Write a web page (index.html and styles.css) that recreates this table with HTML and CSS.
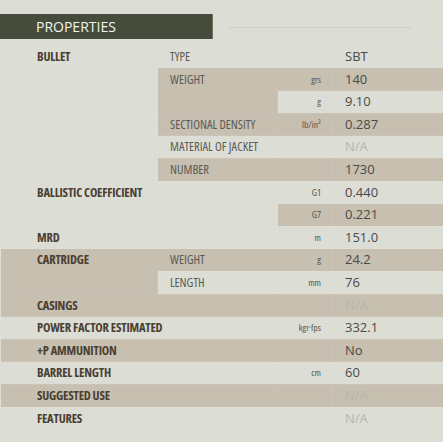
FILE: index.html
```html
<!DOCTYPE html>
<html>
<head>
<meta charset="utf-8">
<link rel="stylesheet" href="styles.css">
</head>
<body>
<div class="head">
  <div class="head-bar">PROPERTIES</div>
  <div class="head-line"></div>
</div>
<table class="props">
  <colgroup><col class="c1"><col class="c2"><col class="c3"><col class="c4"></colgroup>
  <tr><td class="lbl" rowspan="6">BULLET</td><td class="sub">TYPE</td><td class="unit"></td><td class="val">SBT</td></tr>
  <tr><td class="sub" rowspan="2">WEIGHT</td><td class="unit">grs</td><td class="val">140</td></tr>
  <tr><td class="unit">g</td><td class="val">9.10</td></tr>
  <tr><td class="sub">SECTIONAL DENSITY</td><td class="unit">lb/in²</td><td class="val">0.287</td></tr>
  <tr><td class="sub">MATERIAL OF JACKET</td><td class="unit"></td><td class="val na">N/A</td></tr>
  <tr><td class="sub">NUMBER</td><td class="unit"></td><td class="val">1730</td></tr>
  <tr><td class="lbl" rowspan="2" colspan="2">BALLISTIC COEFFICIENT</td><td class="unit">G1</td><td class="val">0.440</td></tr>
  <tr><td class="unit">G7</td><td class="val">0.221</td></tr>
  <tr><td class="lbl" colspan="2">MRD</td><td class="unit">m</td><td class="val">151.0</td></tr>
  <tr><td class="lbl" rowspan="2">CARTRIDGE</td><td class="sub">WEIGHT</td><td class="unit">g</td><td class="val">24.2</td></tr>
  <tr><td class="sub">LENGTH</td><td class="unit">mm</td><td class="val">76</td></tr>
  <tr><td class="lbl" colspan="2">CASINGS</td><td class="unit"></td><td class="val na">N/A</td></tr>
  <tr><td class="lbl" colspan="2">POWER FACTOR ESTIMATED</td><td class="unit">kgr·fps</td><td class="val">332.1</td></tr>
  <tr><td class="lbl" colspan="2">+P AMMUNITION</td><td class="unit"></td><td class="val">No</td></tr>
  <tr><td class="lbl" colspan="2">BARREL LENGTH</td><td class="unit">cm</td><td class="val">60</td></tr>
  <tr><td class="lbl" colspan="2">SUGGESTED USE</td><td class="unit"></td><td class="val na">N/A</td></tr>
  <tr><td class="lbl" colspan="2">FEATURES</td><td class="unit"></td><td class="val na">N/A</td></tr>
</table>
</body>
</html>
```
FILE: styles.css
```css
html, body {
  margin: 0;
  padding: 0;
  background: #dcddd5;
}
body {
  width: 443px;
  height: 442px;
  overflow: hidden;
  font-family: "Open Sans", "DejaVu Sans", sans-serif;
}
.head {
  display: flex;
  align-items: center;
  margin-top: 14px;
  height: 25px;
}
.head-bar {
  width: 176px;
  height: 25px;
  padding-left: 36px;
  background: #454c3c;
  color: #f4f4ee;
  font-size: 14px;
  line-height: 25px;
  border-right: 1px solid #6c6f62;
}
.head-line {
  margin-left: 15px;
  width: 184px;
  height: 1px;
  margin-top: 1px;
  background: #cfd0c7;
}
.props {
  margin-top: 6px;
  width: 443px;
  border-collapse: collapse;
  table-layout: fixed;
}
.c1 { width: 157px; }
.c2 { width: 120px; }
.c3 { width: 55px; }
.c4 { width: 111px; }
.props td {
  height: 22.6px;
  padding: 0;
  box-sizing: border-box;
  vertical-align: top;
  line-height: 21.6px;
  background: #dcddd5;
  border-top: 1px solid rgba(255,255,255,0.07);
  border-left: 1px solid rgba(255,255,255,0.07);
  white-space: nowrap;
}
.props tr:nth-child(even) td {
  background: #c7bfb0;
}
.lbl {
  padding-left: 36px !important;
  font-weight: 700;
  font-size: 12.5px;
  font-stretch: 75%;
  color: #4a4032;
  letter-spacing: -0.2px;
}
.sub {
  padding-left: 12px !important;
  font-size: 12.5px;
  font-stretch: 75%;
  color: #5b5a55;
}
.unit {
  text-align: right;
  padding-right: 11px !important;
  font-size: 9.5px;
  font-stretch: 75%;
  color: #55544f;
}
.val {
  padding-left: 12px !important;
  font-size: 13px;
  color: #4a4a47;
}
.val.na {
  color: #b5b6ae;
}
```
